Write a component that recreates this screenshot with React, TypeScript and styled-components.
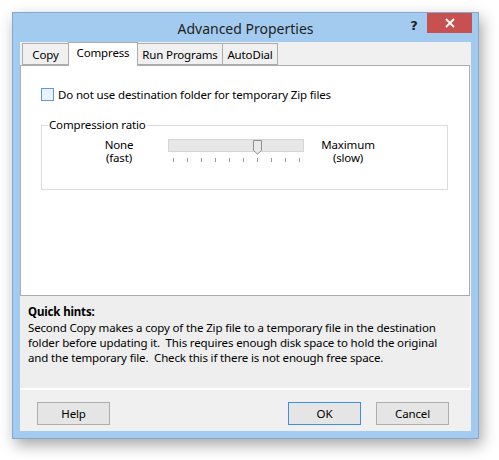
import styled, { createGlobalStyle } from "styled-components";

const GlobalStyle = createGlobalStyle`
  html, body {
    margin: 0;
    padding: 0;
    background: #ffffff;
  }
  body {
    font-family: "Noto Sans", "Open Sans", sans-serif;
    font-size: 11.5px;
    letter-spacing: -0.15px;
    color: #000;
  }
`;

const Page = styled.div`
  width: 499px;
  height: 460px;
  padding: 12px 0 0 12px;
  box-sizing: border-box;
`;

const Window = styled.div`
  width: 467px;
  height: 427px;
  box-sizing: border-box;
  border: 1px solid #83a9cf;
  background: #a3cbef;
  padding: 0 7px 7px 7px;
  display: flex;
  flex-direction: column;
  box-shadow: 3px 6px 14px rgba(0, 0, 0, 0.35);
`;

const TitleBar = styled.div`
  height: 29px;
  position: relative;
  display: flex;
  align-items: center;
  justify-content: center;
`;

const Title = styled.div`
  font-size: 14px;
  letter-spacing: 0;
  color: #1e1e1e;
  margin-top: 2px;
`;

const TitleButtons = styled.div`
  position: absolute;
  right: -1px;
  top: 0;
  display: flex;
  align-items: flex-start;
`;

const HelpGlyph = styled.div`
  width: 26px;
  height: 20px;
  font-family: "DejaVu Sans", sans-serif;
  font-weight: bold;
  font-size: 13px;
  color: #222;
  display: flex;
  justify-content: center;
  align-items: center;
  margin-top: 2px;
`;

const CloseButton = styled.div`
  width: 45px;
  height: 20px;
  background: #c75050;
  display: flex;
  justify-content: center;
  align-items: center;
`;

const Client = styled.div`
  flex: 1;
  background: #f0f0f0;
  display: flex;
  flex-direction: column;
`;

const TabStrip = styled.div`
  display: flex;
  align-items: flex-end;
  height: 23px;
  padding-left: 2px;
`;

const Tab = styled.div<{ $active?: boolean; $w: number }>`
  box-sizing: border-box;
  width: ${(p) => p.$w}px;
  height: ${(p) => (p.$active ? 24 : 22)}px;
  margin-bottom: ${(p) => (p.$active ? -1 : 0)}px;
  padding-bottom: ${(p) => (p.$active ? 4 : 0)}px;
  background: ${(p) => (p.$active ? "#ffffff" : "#f0f0f0")};
  border: 1px solid #acacac;
  border-bottom: ${(p) => (p.$active ? "none" : "1px solid #acacac")};
  display: flex;
  align-items: center;
  justify-content: center;
  position: relative;
  z-index: ${(p) => (p.$active ? 2 : 1)};
  & + & {
    margin-left: -1px;
  }
`;

const Panel = styled.div`
  box-sizing: border-box;
  height: 231px;
  background: #ffffff;
  border: 1px solid #acacac;
  margin-right: 1px;
  padding: 21px 20px 0 20px;
  position: relative;
  z-index: 1;
`;

const CheckRow = styled.label`
  display: flex;
  align-items: center;
  gap: 4px;
  height: 14px;
`;

const CheckBox = styled.span`
  width: 11px;
  height: 11px;
  border: 1px solid #5b9bd5;
  background: #eaf3fd;
  display: inline-block;
`;

const GroupBox = styled.fieldset`
  margin: 17px 0 0 0;
  padding: 0;
  height: 72px;
  box-sizing: border-box;
  width: 407px;
  border: 1px solid #dcdcdc;
`;

const Legend = styled.legend`
  padding: 0 1px;
  margin-left: 6px;
  line-height: 14px;
`;

const SliderRow = styled.div`
  display: flex;
  align-items: flex-start;
  margin-top: 7px;
`;

const EndLabel = styled.div<{ $width: number; $left: number }>`
  width: ${(p) => p.$width}px;
  margin-left: ${(p) => p.$left}px;
  text-align: center;
  line-height: 13px;
  margin-top: -1px;
`;

const SliderBox = styled.div`
  width: 136px;
  margin-left: 23px;
  display: flex;
  flex-direction: column;
`;

const Track = styled.div`
  position: relative;
  height: 13px;
  box-sizing: border-box;
  background: #e7e7e7;
  border: 1px solid #d6d6d6;
`;

const Thumb = styled.svg`
  position: absolute;
  top: 0;
`;

const Ticks = styled.div`
  display: flex;
  justify-content: space-between;
  padding: 0 4px 0 5px;
  margin-top: 6px;
`;

const Tick = styled.span`
  width: 1px;
  height: 4px;
  background: #9a9a9a;
`;

const Hints = styled.div`
  height: 94px;
  box-sizing: border-box;
  background: #eeeeee;
  border-right: 1px solid #ffffff;
  border-bottom: 2px solid #ffffff;
  padding: 8px 8px 0 8px;
  line-height: 15px;
`;

const HintsTitle = styled.div`
  font-weight: bold;
  margin-bottom: 1px;
`;

const ButtonBar = styled.div`
  display: flex;
  align-items: center;
  padding: 12px 22px 0 17px;
  gap: 15px;
`;

const Button = styled.button<{ $default?: boolean }>`
  width: 73px;
  height: 23px;
  box-sizing: border-box;
  font-family: "Noto Sans", "Open Sans", sans-serif;
  font-size: 11.5px;
  letter-spacing: -0.15px;
  color: #000;
  background: #e5e5e5;
  border: 1px solid ${(p) => (p.$default ? "#3c8fe0" : "#adadad")};
  padding: 0;
`;

const Spacer = styled.div`
  flex: 1;
`;

export default function App() {
  const ticks = Array.from({ length: 10 });
  return (
    <Page>
      <GlobalStyle />
      <Window>
        <TitleBar>
          <Title>Advanced Properties</Title>
          <TitleButtons>
            <HelpGlyph>?</HelpGlyph>
            <CloseButton>
              <svg width="10" height="10" viewBox="0 0 10 10">
                <path d="M1 1 L9 9 M9 1 L1 9" stroke="#ffffff" strokeWidth="1.8" />
              </svg>
            </CloseButton>
          </TitleButtons>
        </TitleBar>
        <Client>
          <TabStrip>
            <Tab $w={47}>Copy</Tab>
            <Tab $w={70} $active>
              Compress
            </Tab>
            <Tab $w={86}>Run Programs</Tab>
            <Tab $w={56}>AutoDial</Tab>
          </TabStrip>
          <Panel>
            <CheckRow>
              <CheckBox />
              <span>Do not use destination folder for temporary Zip files</span>
            </CheckRow>
            <GroupBox>
              <Legend>Compression ratio</Legend>
              <SliderRow>
                <EndLabel $width={52} $left={51}>
                  None
                  <br />
                  (fast)
                </EndLabel>
                <SliderBox>
                  <Track>
                    <Thumb width="10" height="15" viewBox="0 0 10 15" style={{ left: 84 }}>
                      <path d="M0.5 0.5 H8.5 V10.5 L4.5 14 L0.5 10.5 Z" fill="#e9e9e9" stroke="#8f8f8f" />
                    </Thumb>
                  </Track>
                  <Ticks>
                    {ticks.map((_, i) => (
                      <Tick key={i} />
                    ))}
                  </Ticks>
                </SliderBox>
                <EndLabel $width={70} $left={9}>
                  Maximum
                  <br />
                  (slow)
                </EndLabel>
              </SliderRow>
            </GroupBox>
          </Panel>
          <Hints>
            <HintsTitle>Quick hints:</HintsTitle>
            Second Copy makes a copy of the Zip file to a temporary file in the destination
            <br />
            folder before updating it.&nbsp; This requires enough disk space to hold the original
            <br />
            and the temporary file.&nbsp; Check this if there is not enough free space.
          </Hints>
          <ButtonBar>
            <Button>Help</Button>
            <Spacer />
            <Button $default>OK</Button>
            <Button>Cancel</Button>
          </ButtonBar>
        </Client>
      </Window>
    </Page>
  );
}
